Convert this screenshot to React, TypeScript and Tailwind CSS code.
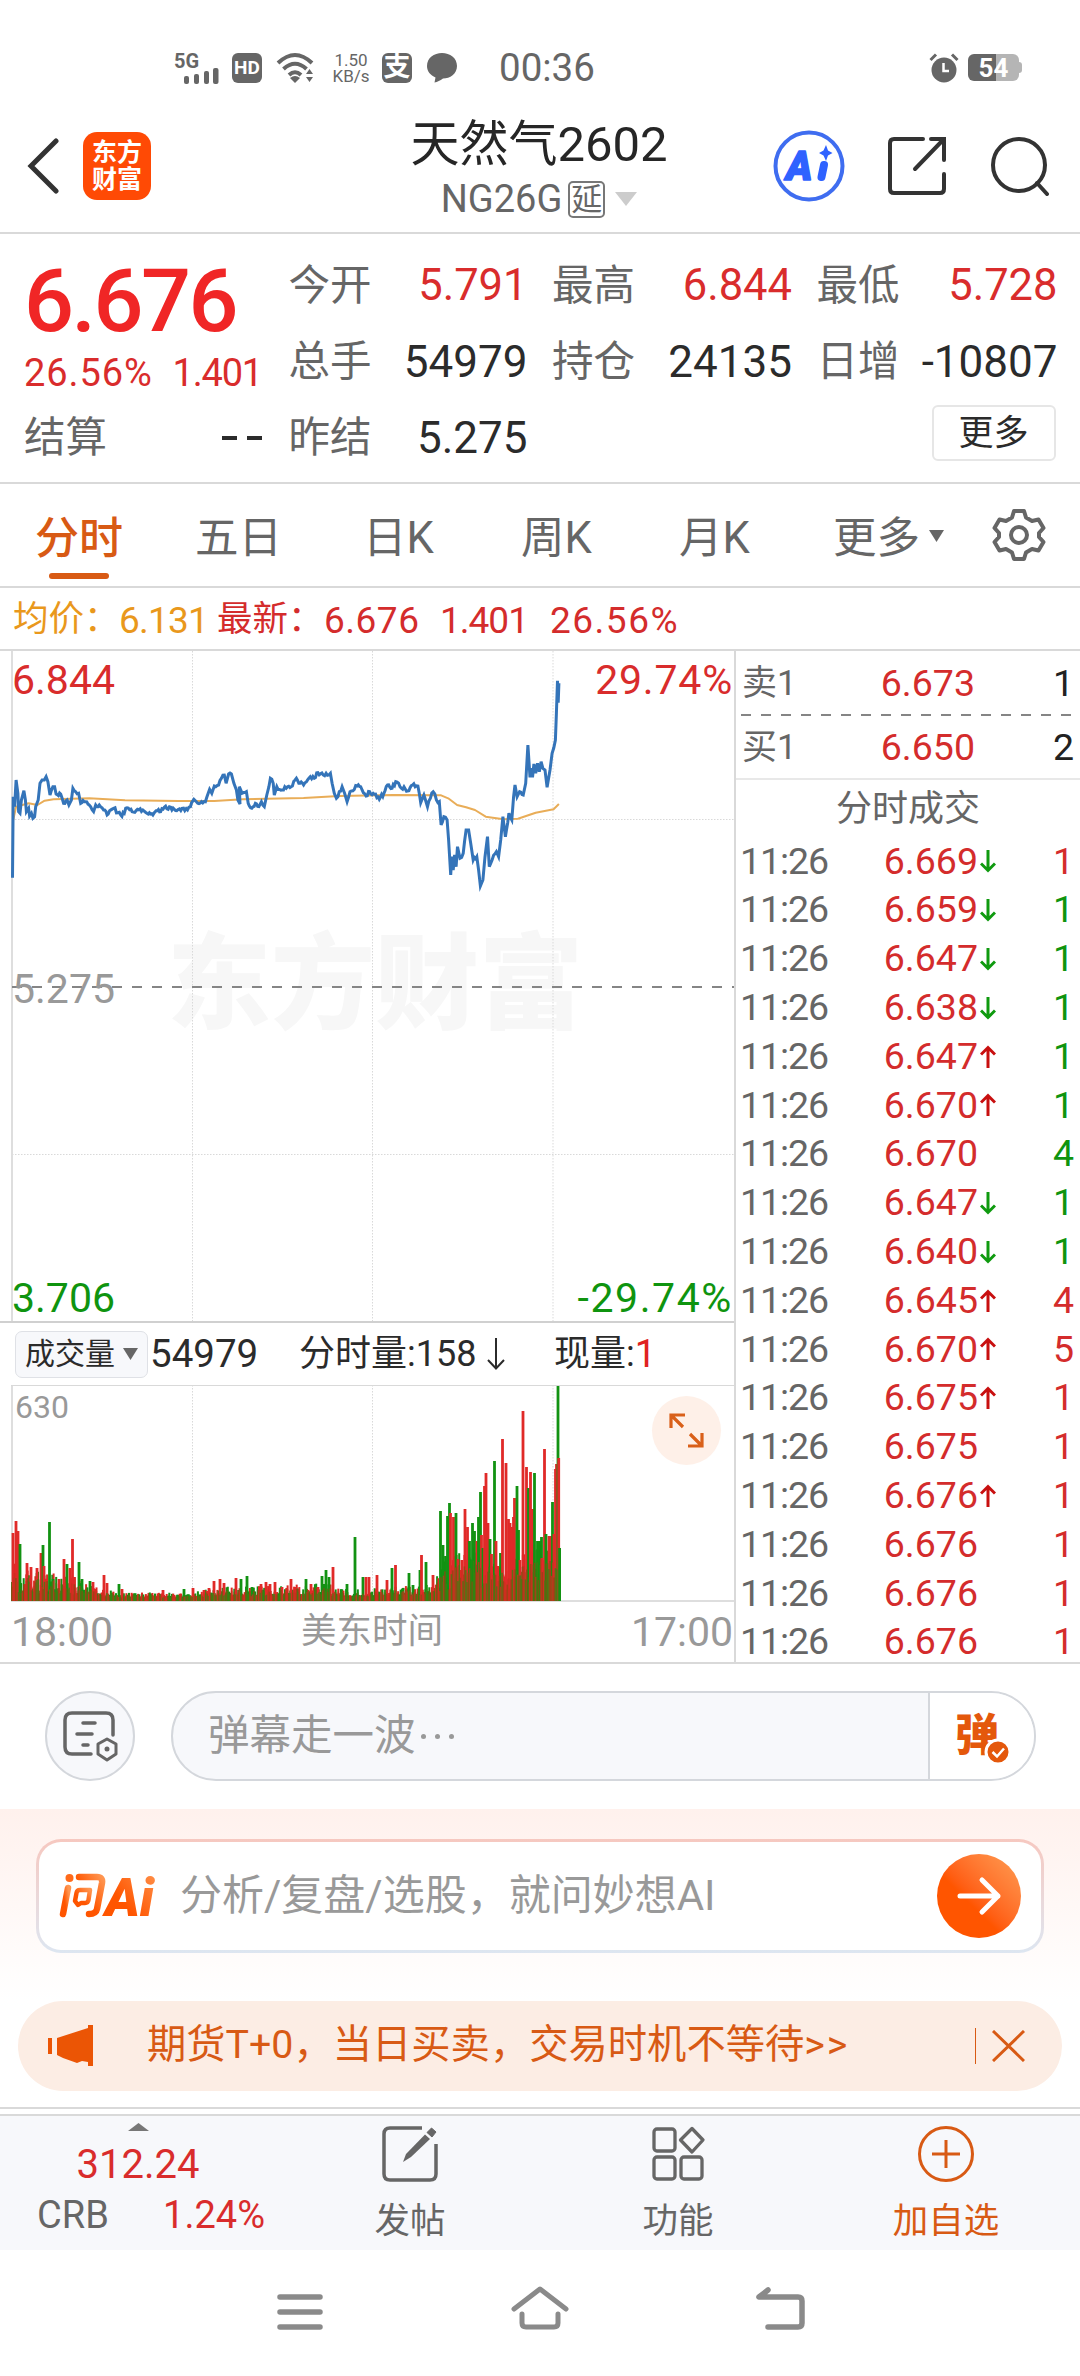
import type { ReactNode } from "react";

const RED = "#d42c2c";
const GREEN = "#0f940f";

type Dir = "up" | "down" | null;

const ticks: { price: string; dir: Dir; qty: number; buy: boolean }[] = [
  { price: "6.669", dir: "down", qty: 1, buy: true },
  { price: "6.659", dir: "down", qty: 1, buy: false },
  { price: "6.647", dir: "down", qty: 1, buy: false },
  { price: "6.638", dir: "down", qty: 1, buy: false },
  { price: "6.647", dir: "up", qty: 1, buy: false },
  { price: "6.670", dir: "up", qty: 1, buy: false },
  { price: "6.670", dir: null, qty: 4, buy: false },
  { price: "6.647", dir: "down", qty: 1, buy: false },
  { price: "6.640", dir: "down", qty: 1, buy: false },
  { price: "6.645", dir: "up", qty: 4, buy: true },
  { price: "6.670", dir: "up", qty: 5, buy: true },
  { price: "6.675", dir: "up", qty: 1, buy: true },
  { price: "6.675", dir: null, qty: 1, buy: true },
  { price: "6.676", dir: "up", qty: 1, buy: true },
  { price: "6.676", dir: null, qty: 1, buy: true },
  { price: "6.676", dir: null, qty: 1, buy: true },
  { price: "6.676", dir: null, qty: 1, buy: true },
];

// raw samples, scaled down by 2.8 horizontally and 3 vertically
const priceRaw = [
  35, 713, 37, 470, 41, 500, 45, 420, 50, 460, 52, 515, 56, 520, 60, 480, 67, 452, 71, 480, 74, 515, 80, 505, 83, 528,
  88, 520, 92, 535, 97, 530, 100, 500, 107, 480, 112, 430, 118, 420, 124, 420, 129, 410, 134, 425, 140, 465, 148, 440,
  153, 440, 157, 462, 170, 462, 178, 490, 188, 480, 193, 495, 200, 480, 204, 445, 212, 455, 220, 460, 226, 490, 236,
  485, 250, 495, 262, 515, 268, 495, 278, 495, 290, 510, 303, 522, 318, 505, 330, 518, 338, 525, 348, 520, 352, 505,
  370, 515, 385, 508, 400, 510, 415, 522, 428, 525, 437, 512, 450, 515, 460, 502, 478, 502, 495, 512, 510, 505, 525,
  510, 533, 500, 543, 478, 550, 485, 575, 485, 583, 460, 587, 448, 593, 460, 600, 438, 612, 435, 620, 415, 628, 405,
  633, 430, 640, 402, 648, 402, 655, 430, 662, 450, 666, 480, 672, 492, 670, 440, 678, 460, 690, 455, 695, 490, 705,
  505, 715, 490, 725, 500, 732, 485, 740, 500, 747, 465, 753, 440, 757, 415, 765, 430, 768, 465, 775, 440, 790, 450,
  805, 440, 815, 440, 830, 415, 840, 430, 850, 435, 865, 415, 880, 415, 890, 398, 905, 405, 925, 400, 930, 430, 936,
  460, 942, 475, 950, 455, 958, 440, 965, 460, 972, 485, 980, 455, 1000, 438, 1010, 440, 1025, 468, 1035, 455, 1045,
  460, 1062, 478, 1075, 460, 1085, 435, 1098, 445, 1108, 425, 1120, 440, 1135, 448, 1145, 452, 1155, 435, 1170, 438,
  1178, 488, 1187, 465, 1197, 500, 1205, 475, 1213, 455, 1222, 480, 1230, 485, 1235, 555, 1243, 530, 1252, 540, 1256,
  600, 1262, 705, 1265, 650, 1269, 690, 1273, 645, 1277, 680, 1281, 620, 1288, 655, 1297, 640, 1305, 570, 1312, 570,
  1318, 610, 1325, 660, 1335, 650, 1340, 690, 1345, 738, 1352, 720, 1358, 650, 1365, 590, 1370, 680, 1378, 660, 1390,
  635, 1396, 650, 1402, 600, 1408, 530, 1415, 590, 1425, 520, 1433, 540, 1438, 470, 1442, 435, 1448, 470, 1455, 455,
  1465, 465, 1472, 430, 1478, 315, 1484, 412, 1487, 385, 1491, 412, 1495, 372, 1500, 400, 1505, 370, 1510, 395, 1515,
  365, 1520, 385, 1526, 390, 1532, 442, 1540, 390, 1546, 340, 1555, 300, 1558, 220, 1561, 122, 1563, 188, 1565, 130,
];

const avgRaw = [
  37, 540, 45, 500, 80, 490, 105, 495, 125, 482, 150, 478, 250, 475, 350, 481, 500, 483, 600, 483, 680, 478, 850, 474,
  950, 468, 1100, 465, 1235, 466, 1255, 475, 1280, 495, 1305, 502, 1330, 510, 1360, 530, 1410, 538, 1450, 536, 1500,
  518, 1550, 508, 1565, 492,
];

// small deterministic noise, keeps the curves identical on every render
function noise(n: number) {
  const v = Math.sin(n * 127.1 + 3.7) * 43758.5453;
  return v - Math.floor(v);
}

function toPoints(raw: number[], jitter: number) {
  const out: string[] = [];
  for (let i = 0; i < raw.length; i += 2) {
    const x = raw[i] / 2.8;
    const y = raw[i + 1] / 3 - 11;
    out.push(`${x.toFixed(1)},${y.toFixed(1)}`);
    if (jitter && i + 3 < raw.length && raw[i + 2] - raw[i] > 7) {
      const nx = raw[i + 2] / 2.8;
      const ny = raw[i + 3] / 3 - 11;
      const steps = Math.round((nx - x) / 1.3);
      for (let s = 1; s < steps; s++) {
        const t = s / steps;
        const j = (noise(i * 9 + s) - 0.5) * jitter;
        out.push(`${(x + (nx - x) * t).toFixed(1)},${(y + (ny - y) * t + j).toFixed(1)}`);
      }
    }
  }
  return out.join(" ");
}

// x, height, 1 = red / 0 = green
const peaks = [
  [13, 68, 1], [16, 80, 1], [18, 70, 1], [20, 57, 0], [27, 38, 1], [31, 34, 1], [37, 33, 1], [41, 48, 1], [43, 56, 0],
  [44, 35, 1], [49.5, 79, 0], [53, 22, 0], [59, 22, 1], [64, 42, 1], [67, 37, 0], [70, 33, 1], [72.5, 62, 1],
  [74.5, 24, 1], [79, 39, 0], [82, 22, 0], [90, 20, 0], [93, 19, 1], [104, 26, 1], [107, 18, 1], [119, 17, 0],
  [122, 12, 1], [163, 11, 1], [184, 12, 0], [193, 13, 1], [204, 11, 1], [209, 13, 1], [214, 20, 1], [220, 22, 1],
  [224, 18, 1], [236, 23, 1], [241, 22, 0], [247, 25, 0], [252, 14, 0], [261, 17, 1], [266, 19, 1], [270, 17, 1],
  [275, 19, 1], [282, 14, 1], [291, 22, 1], [296, 14, 1], [306, 22, 0], [311, 17, 1], [318, 14, 1], [322, 25, 0],
  [326, 31, 0], [329, 24, 0], [333, 34, 1], [347, 17, 0], [355, 64, 0], [363, 24, 0], [366, 24, 1], [369, 24, 1],
  [377, 26, 1], [387, 21, 1], [392, 33, 0], [395.5, 36, 1], [403, 13, 0], [409, 28, 0], [413, 16, 0], [420, 31, 0],
  [421.5, 46, 1], [426, 39, 0], [433, 26, 1], [440.5, 90, 0], [443, 56, 0], [445.5, 45, 0], [447.5, 85, 0],
  [449.5, 98, 0], [450.5, 88, 1], [453.5, 84, 1], [456, 88, 0], [458, 42, 1], [462, 41, 1], [465, 92, 1],
  [467.5, 74, 1], [469.5, 60, 0], [472.5, 78, 0], [474.5, 70, 0], [477, 60, 1], [478.5, 84, 0], [480.5, 109, 0],
  [481.5, 66, 1], [483, 53, 0], [484.5, 115, 1], [486, 128, 1], [488, 78, 1], [490, 62, 0], [491.5, 47, 1],
  [494.5, 140, 0], [496, 60, 1], [498, 35, 1], [500.5, 48, 0], [502.5, 162, 1], [506, 138, 1], [508.5, 82, 1],
  [510, 78, 1], [512, 74, 1], [513.5, 84, 1], [514.5, 103, 1], [517, 115, 0], [518.5, 71, 0], [520, 41, 1],
  [523, 190, 1], [526.5, 134, 1], [528.5, 113, 0], [530.5, 129, 1], [532.5, 92, 1], [534.5, 128, 0], [537.5, 60, 0],
  [539.5, 60, 0], [541.5, 64, 0], [542, 43, 1], [544.5, 152, 1], [546, 67, 0], [549, 65, 1], [551, 65, 1],
  [552.5, 99, 0], [554, 67, 1], [555.5, 132, 1], [556.5, 137, 1], [558, 215, 0], [558.7, 143, 1], [559.6, 53, 0],
];

const envelope = [
  [12, 45], [22, 28], [70, 24], [90, 13], [120, 6], [190, 5], [215, 11], [330, 15], [350, 9], [435, 14], [440, 38],
  [480, 55], [500, 38], [520, 45], [560, 62],
];

function level(x: number) {
  for (let i = 1; i < envelope.length; i++) {
    const [x1, h1] = envelope[i];
    const [x0, h0] = envelope[i - 1];
    if (x <= x1) return h0 + ((h1 - h0) * (x - x0)) / (x1 - x0);
  }
  return 0;
}

const filler = Array.from({ length: 420 }, (_, i) => {
  const x = 12 + i * 1.3;
  return { x, h: 3 + level(x) * (0.25 + noise(i) * 0.75), red: noise(i + 900) > 0.5 };
});

function PriceChart() {
  return (
    <div className="relative h-[670px] w-[734px]">
      <span className="absolute left-[167px] top-[283px] text-[104px] font-black leading-none text-[#f7f7f7]">
        东方财富
      </span>
      <svg className="absolute left-0 top-0" width="734" height="671" fill="none">
        <g stroke="#d9d9d9" strokeDasharray="1.5 1.5">
          <path d="M192.5 0V670M372.5 0V670M553 0V670M12 168.5H734M12 503.5H734" />
        </g>
        <path d="M12 0V670" stroke="#dedede" strokeWidth="2" />
        <path d="M12 336H734" stroke="#858585" strokeWidth="2" strokeDasharray="10 10" />
        <polyline points={toPoints(avgRaw, 0)} stroke="#e9ad58" strokeWidth="2" strokeLinejoin="round" />
        <polyline points={toPoints(priceRaw, 4)} stroke="#3474b9" strokeWidth="3" />
      </svg>
      <span className="absolute left-[12px] top-[9px] text-[41px] leading-none text-[#d92c2c]">6.844</span>
      <span className="absolute right-[1px] top-[9px] text-[41px] leading-none tracking-[0.8px] text-[#d92c2c]">
        29.74%
      </span>
      <span className="absolute left-[12px] top-[318px] text-[41px] leading-none text-[#999]">5.275</span>
      <span className="absolute left-[12px] top-[627px] text-[41px] leading-none text-[#0f940f]">3.706</span>
      <span className="absolute right-[1px] top-[627px] text-[41px] leading-none tracking-[1.600px] text-[#0f940f]">
        -29.74%
      </span>
    </div>
  );
}

function VolumeChart() {
  return (
    <div className="relative h-[217px] w-[734px]">
      <svg className="absolute left-0 top-0" width="734" height="217" fill="none">
        <path d="M192.5 0V216M372.5 0V216M553 0V216" stroke="#d9d9d9" strokeDasharray="1.5 1.5" />
        <path d="M12 0V216M11 216H734" stroke="#dedede" strokeWidth="2" />
        <path d="M11 .5H734" stroke="#d9d9d9" />
        {filler.map((b) => (
          <rect key={b.x} x={b.x - 1} y={216 - b.h} width="2" height={b.h} fill={b.red ? "#dd2a22" : "#149014"} />
        ))}
        {peaks.map(([x, h, red], i) => (
          <rect key={i} x={x - 1.4} y={216 - h} width="2.8" height={h} fill={red ? "#e02a28" : "#129212"} />
        ))}
        {filler.map((b, i) => (
          <rect
            key={b.x}
            x={b.x - 0.8}
            y={216 - b.h * 0.75}
            width="1.6"
            height={b.h * 0.75}
            fill={i % 3 === 0 ? "#8b4a12" : b.red ? "#c9301e" : "#3c8010"}
            opacity="0.75"
          />
        ))}
      </svg>
      <span className="absolute left-[15px] top-[6px] text-[32px] leading-none text-[#999]">630</span>
      <button className="absolute left-[652px] top-[11px] flex size-[69px] items-center justify-center rounded-full bg-[#fef0e8]">
        <svg width="35" height="35" fill="none" stroke="#d9601a" strokeWidth="3.2">
          <path d="M2 15V2H16M3 3L14 14M33 20V33H19M32 32L21 21" />
        </svg>
      </button>
    </div>
  );
}

function TickArrow({ dir }: { dir: Dir }) {
  if (dir === "up")
    return (
      <svg width="16" height="24" fill="none" stroke="#c80f0f" strokeWidth="3">
        <path d="M8 23V3M1 9.500L8 2.500L15 9.500" />
      </svg>
    );
  if (dir === "down")
    return (
      <svg width="16" height="24" fill="none" stroke="#0f9a0f" strokeWidth="3">
        <path d="M8 1V21M1 14.500L8 21.500L15 14.500" />
      </svg>
    );
  return null;
}

function QuoteRow({ label, price, qty }: { label: string; price: string; qty: string }) {
  return (
    <div className="flex h-[62px] items-center pl-[6px] pr-[6px] pt-[1px] text-[37.500px] leading-none">
      <span className="w-[100px] whitespace-nowrap text-[35px] text-[#666]">{label}</span>
      <span className="w-[133px] text-right text-[#d42c2c]">{price}</span>
      <span className="flex-1 text-right text-[#222]">{qty}</span>
    </div>
  );
}

function OrderBook() {
  return (
    <div className="h-[1011px] w-[346px] border-l-2 border-[#d9d9d9]">
      <div className="h-[1px]" />
      <QuoteRow label="卖1" price="6.673" qty="1" />
      <svg className="block" width="344" height="2">
        <path d="M5 1H336" stroke="#858585" strokeWidth="2" strokeDasharray="10 10" />
      </svg>
      <QuoteRow label="买1" price="6.650" qty="2" />
      <div className="h-[2px] bg-[#e8e8e8]" />
      <div className="flex h-[57px] items-center justify-center pt-[1px] text-[36px] leading-none text-[#666]">
        分时成交
      </div>
      {ticks.map((t, i) => (
        <div key={i} className="flex h-[48.8px] items-center pl-[4px] pr-[6px] text-[37.500px] leading-none">
          <span className="w-[103px] tracking-[-1.100px] text-[#666]">11:26</span>
          <span className="w-[135px] text-right text-[#d42c2c]">{t.price}</span>
          <span className="w-[20px] pl-[2px]">
            <TickArrow dir={t.dir} />
          </span>
          <span className="flex-1 text-right" style={{ color: t.buy ? RED : GREEN }}>
            {t.qty}
          </span>
        </div>
      ))}
    </div>
  );
}

function StatusBar() {
  return (
    <div className="flex h-[100px] items-center pl-[174px] pr-[58px] pt-[35px] text-[#666]">
      <svg className="overflow-visible" width="46" height="32" fill="#666">
        <text x="0" y="16" fontSize="20" fontWeight="700">
          5G
        </text>
        <rect x="10" y="24" width="5" height="8" rx="2" />
        <rect x="20" y="22" width="5" height="10" rx="2" />
        <rect x="30" y="19" width="5" height="13" rx="2" />
        <rect x="39" y="16" width="5.500" height="16" rx="2" />
      </svg>
      <span className="ml-[12px] flex h-[30px] w-[30px] items-center justify-center rounded-[6px] bg-[#666] text-[19px] font-bold leading-none text-white">
        HD
      </span>
      <svg className="ml-[14px]" width="40" height="32" fill="none" stroke="#666" strokeWidth="4">
        <path d="M2 11Q19 -5 36 11" />
        <path d="M7.500 17Q19 6.500 30.500 17" />
        <path d="M13 23Q19 17.500 25 23" />
        <path d="M14 26Q19 22 24 26L19 31Z" fill="#666" stroke="none" />
        <path d="M30 22L33.500 17L37 22ZM30 25H37L33.500 30Z" fill="#666" stroke="none" />
      </svg>
      <div className="ml-[16px] w-[38px] text-center text-[17px] leading-[16px]">
        <div>1.50</div>
        <div>KB/s</div>
      </div>
      <span className="ml-[12px] flex size-[30px] items-center justify-center rounded-[6px] bg-[#666] text-[27px] font-bold leading-none text-white">
        支
      </span>
      <svg className="ml-[15px]" width="30" height="30" fill="#666">
        <path d="M15 0C23 0 30 5 30 13C30 21 23 25.500 16 25.500C13 27.500 10.500 29 7.500 29.500L8.500 24.500C3.500 22 0 18.500 0 13C0 5 7 0 15 0Z" />
      </svg>
      <span className="ml-[42px] pt-[2px] text-[38.500px] leading-none">00:36</span>
      <svg className="ml-auto" width="30" height="30" fill="none" stroke="#666" strokeWidth="3">
        <circle cx="15" cy="17" r="12.500" fill="#666" stroke="none" />
        <path d="M1.500 7L7 1.500M28.500 7L23 1.500" />
        <path d="M14.500 10V18H20" stroke="#fff" strokeWidth="2.500" />
      </svg>
      <div className="ml-[9px] flex h-[27px] items-center">
        <span className="flex h-[27px] w-[51px] items-center justify-center rounded-[6px] bg-linear-to-r from-[#666] from-54% to-[#b5b5b5] to-54% text-[26px] font-bold leading-none text-white">
          54
        </span>
        <span className="h-[11px] w-[3px] rounded-r bg-[#b5b5b5]" />
      </div>
    </div>
  );
}

function Header() {
  return (
    <div className="flex h-[134px] items-center border-b-2 border-[#d9d9d9] pl-[27px] pr-[31px]">
      <svg width="32" height="56" fill="none" stroke="#333" strokeWidth="5" strokeLinecap="round">
        <path d="M29 3L4 28L29 53" />
      </svg>
      <div className="ml-[24px] flex size-[68px] flex-col items-center justify-center rounded-[14px] bg-[#ff4a05] text-[25px] font-bold leading-[27px] text-white">
        <span>东方</span>
        <span>财富</span>
      </div>
      <div className="flex flex-1 flex-col items-center pl-[154px] pt-[6px]">
        <div className="whitespace-nowrap text-[49px] leading-none text-[#262626]">天然气2602</div>
        <div className="mt-[11px] flex items-center text-[#666]">
          <span className="text-[38px] leading-none">NG26G</span>
          <span className="ml-[6px] flex size-[37px] items-center justify-center rounded-[5px] border-2 border-[#777] text-[31px] leading-none">
            延
          </span>
          <svg className="ml-[10px]" width="22" height="14" fill="#ccc">
            <path d="M0 0H22L11 14Z" />
          </svg>
        </div>
      </div>
      <svg width="72" height="72" fill="none">
        <circle cx="36" cy="36" r="33.500" stroke="#3f6df0" strokeWidth="4" />
        <text
          x="13"
          y="50"
          fontSize="40"
          fontWeight="900"
          fontStyle="italic"
          fill="#2f62ff"
          stroke="#2f62ff"
          strokeWidth="1.500"
          strokeLinejoin="round"
        >
          A
        </text>
        <path d="M51 35L48.500 47" stroke="#2f62ff" strokeWidth="8" strokeLinecap="round" />
        <path d="M53 15L55 20.500L59.500 23L55 25.500L53 31L50.500 25.500L46 23L50.500 20.500Z" fill="#2f62ff" />
      </svg>
      <svg className="ml-[43px]" width="58" height="60" fill="none" stroke="#333" strokeWidth="4" strokeLinecap="round">
        <path d="M35 3H6Q2 3 2 7V53Q2 57 6 57H52Q56 57 56 53V38" />
        <path d="M43 3H56V24M55 4L27 33" />
      </svg>
      <svg className="ml-[45px]" width="58" height="60" fill="none" stroke="#333" strokeWidth="4" strokeLinecap="round">
        <circle cx="28" cy="29" r="26" />
        <path d="M46 47L56 58" />
      </svg>
    </div>
  );
}

function Stat({ label, value, red }: { label: string; value: string; red?: boolean }) {
  return (
    <div className="flex items-center justify-between whitespace-nowrap leading-none">
      <span className="text-[41.500px] text-[#666]">{label}</span>
      <span
        className={
          red ? "-mr-[2px] text-[43.500px] text-[#d92c2c]" : "-mr-[2px] text-[44px] text-[#2b2b2b]"
        }
      >
        {value}
      </span>
    </div>
  );
}

function Stats() {
  return (
    <div className="grid h-[250px] grid-cols-[238px_237px_238px_239px] grid-rows-[76px_76px_76px] gap-x-[26.500px] border-b-2 border-[#d9d9d9] pl-[24px] pt-[14px]">
      <div className="row-span-2 flex flex-col">
        <span className="mt-[9px] text-[88px] font-medium leading-none tracking-[-2.500px] text-[#f02626]">6.676</span>
        <div className="mt-[9px] flex items-center justify-between text-[38px] leading-none text-[#d92c2c]">
          <span className="tracking-[0.900px]">26.56%</span>
          <span className="tracking-[-1.200px]">1.401</span>
        </div>
      </div>
      <Stat label="今开" value="5.791" red />
      <Stat label="最高" value="6.844" red />
      <Stat label="最低" value="5.728" red />
      <Stat label="总手" value="54979" />
      <Stat label="持仓" value="24135" />
      <Stat label="日增" value="-10807" />
      <div className="flex items-center justify-between text-[41.500px] leading-none text-[#666]">
        <span>结算</span>
        <span className="flex gap-[10px]">
          <i className="h-[3.500px] w-[15px] bg-[#2b2b2b]" />
          <i className="h-[3.500px] w-[15px] bg-[#2b2b2b]" />
        </span>
      </div>
      <Stat label="昨结" value="5.275" />
      <div />
      <div className="flex justify-end pt-[5px]">
        <button className="flex h-[56px] w-[124px] items-center justify-center rounded-[6px] border-2 border-[#e6e6e6] text-[35px] leading-none text-[#2b2b2b]">
          更多
        </button>
      </div>
    </div>
  );
}

function Tabs() {
  return (
    <div className="flex h-[104px] items-start border-b-2 border-[#d9d9d9] pl-[35px] text-[43.500px] leading-none text-[#666]">
      <div className="flex w-[160px] flex-col pt-[33px] text-[#d85a14]">
        <span className="text-[44px] font-medium">分时</span>
        <span className="ml-[14px] mt-[12px] h-[6px] w-[60px] rounded-full bg-[#d85a14]" />
      </div>
      <span className="w-[168px] pt-[33px]">五日</span>
      <span className="w-[158px] pt-[33px]">日K</span>
      <span className="w-[158px] pt-[33px]">周K</span>
      <span className="w-[154px] pt-[33px]">月K</span>
      <span className="w-[96px] pt-[33px]">更多</span>
      <svg className="mt-[46px]" width="15" height="12" fill="#666">
        <path d="M0 0H15L7.500 12Z" />
      </svg>
      <svg className="ml-[48px] mt-[24px]" width="54" height="54" viewBox="0 0 54 54" fill="none" stroke="#666" strokeWidth="4">
        <path
          strokeLinejoin="round"
          d="M22 3H32L34 9.500L40 13L46.500 11.500L51.500 20L47 25V29L51.500 34L46.500 42.500L40 41L34 44.500L32 51H22L20 44.500L14 41L7.500 42.500L2.500 34L7 29V25L2.500 20L7.500 11.500L14 13L20 9.500Z"
        />
        <circle cx="27" cy="27" r="8" />
      </svg>
    </div>
  );
}

function AverageLine() {
  return (
    <div className="flex h-[63px] items-center whitespace-pre border-b-2 border-[#d9d9d9] pl-[13px] pt-[3px] text-[37px] leading-none text-[#d42c2c]">
      <span className="w-[106px] text-[35.500px] text-[#e9981c]">均价：</span>
      <span className="w-[98px] tracking-[-0.800px] text-[#e9981c]">6.131</span>
      <span className="w-[107px] text-[35.500px]">最新：</span>
      <span className="w-[116px] tracking-[0.500px]">6.676</span>
      <span className="w-[110px] tracking-[-1px]">1.401</span>
      <span className="tracking-[1.500px]">26.56%</span>
    </div>
  );
}

function VolumeInfo() {
  return (
    <div className="flex h-[64px] items-center border-t-2 border-[#d0d0d0] pl-[15px] text-[36px] leading-none text-[#2b2b2b]">
      <div className="flex h-[47px] w-[133px] items-center gap-[8px] rounded-[7px] border border-[#dfe1e6] bg-[#f7f8fb] pl-[9px]">
        <span className="text-[30px]">成交量</span>
        <svg width="15" height="12" fill="#666">
          <path d="M0 0H15L7.500 12Z" />
        </svg>
      </div>
      <span className="ml-[2px] w-[149px] text-[38.500px]">54979</span>
      <span className="w-[182px]">分时量:158</span>
      <svg className="ml-[3px]" width="26" height="34" fill="none" stroke="#2b2b2b" strokeWidth="2">
        <path d="M12 1V31M4 23L12 31.500L20 23" />
      </svg>
      <span className="ml-[44px]">现量:</span>
      <span className="text-[38px] text-[#e02222]">1</span>
    </div>
  );
}

function DanmuBar() {
  return (
    <div className="flex h-[145px] items-center pb-[1px] pl-[45px]">
      <button className="flex size-[90px] items-center justify-center rounded-full border-2 border-[#d4d7dc] bg-[#f7f8fb]">
        <svg width="56" height="52" fill="none" stroke="#666" strokeWidth="3.500" strokeLinecap="round">
          <path d="M29 44H10Q3 44 3 37V10Q3 3 10 3H44Q51 3 51 10V25" />
          <path d="M21 13H33M15 24H30M21 35H26" />
          <path d="M45 29L54 34V44L45 50L36 44V34Z" strokeLinejoin="round" strokeWidth="3" />
          <circle cx="45" cy="39" r="2.500" fill="#666" stroke="none" />
        </svg>
      </button>
      <div className="ml-[36px] flex h-[90px] w-[865px] overflow-hidden rounded-full border-2 border-[#d4d7dc] bg-[#f7f8fb]">
        <div className="flex flex-1 items-center pl-[35px] text-[41.500px] leading-none text-[#999]">
          弹幕走一波
          <span className="flex gap-[9px] pl-[5px]">
            <i className="size-[5px] rounded-full bg-[#999]" />
            <i className="size-[5px] rounded-full bg-[#999]" />
            <i className="size-[5px] rounded-full bg-[#999]" />
          </span>
        </div>
        <div className="relative w-[106px] border-l-2 border-[#d4d7dc] bg-white">
          <span className="absolute left-[25px] top-[21px] text-[44px] font-black leading-none text-[#e4580c]">弹</span>
          <svg className="absolute left-[54px] top-[45px]" width="28" height="28" fill="none">
            <circle cx="14" cy="14" r="12" fill="#e4580c" stroke="#fff" strokeWidth="3" />
            <path d="M8.500 14L13 18.500L20 10.500" stroke="#fff" strokeWidth="2.500" />
          </svg>
        </div>
      </div>
    </div>
  );
}

function AskAi() {
  return (
    <div className="h-[192px] bg-linear-to-b from-[#fff1ed] to-white px-[36px] pt-[30px]">
      <div className="rounded-[25px] bg-linear-to-b from-[#f6c8c0] to-[#dde6f1] px-[3px] py-[3px]">
        <div className="flex h-[108px] items-center rounded-[22px] bg-white pl-[20px] pr-[20px]">
          <svg className="overflow-visible" width="102" height="50" viewBox="0 0 102 50">
            <defs>
              <linearGradient id="ask" x1="0" y1="1" x2="1" y2="0">
                <stop offset="0.400" stopColor="#ff5500" />
                <stop offset="1" stopColor="#ff9550" />
              </linearGradient>
            </defs>
            <g fill="none" stroke="url(#ask)" strokeWidth="6.500" strokeLinecap="round" strokeLinejoin="round">
              <path d="M9 17L4 43" />
              <path d="M20 6H38Q44 6 43 12L38 38Q37 43 30 43" />
              <path d="M31 19H21Q18 19 17.500 22L16 30L19 34L22 32H26Q29 32 29.500 29Z" strokeWidth="4.500" />
            </g>
            <circle cx="10.500" cy="7" r="4" fill="#ff6a1a" />
            <text x="46" y="45" fontSize="53" fontWeight="900" fontStyle="italic" fill="url(#ask)" textLength="49">
              Ai
            </text>
          </svg>
          <span className="ml-[19px] whitespace-nowrap text-[42px] leading-none text-[#999]">
            分析/复盘/选股，就问妙想AI
          </span>
          <button className="ml-auto flex size-[84px] items-center justify-center rounded-full bg-linear-to-tr from-[#ff5500] from-40% to-[#ff9d52]">
            <svg width="46" height="40" fill="none" stroke="#fff" strokeWidth="5" strokeLinecap="round" strokeLinejoin="round">
              <path d="M4 20H42M26 4L42 20L26 36" />
            </svg>
          </button>
        </div>
      </div>
    </div>
  );
}

function PromoBanner() {
  return (
    <div className="mx-[18px] flex h-[90px] items-center rounded-full bg-[#fcede4] pl-[30px] text-[#d85a14]">
      <svg width="46" height="42" fill="#eb5505">
        <path d="M0 13H4V29H0ZM9 13L40 3V0H45V41H40V37L34 36L29 38L15 33L9 30Z" />
      </svg>
      <span className="ml-[53px] whitespace-nowrap text-[39.300px] leading-none">
        期货T+0，当日买卖，交易时机不等待<span className="tracking-[2px]">&gt;&gt;</span>
      </span>
      <span className="ml-auto h-[36px] w-[1.500px] bg-[#d85a14]" />
      <svg className="ml-[16px] mr-[37px]" width="33" height="32" fill="none" stroke="#d85a14" strokeWidth="3">
        <path d="M1 1L32 31M32 1L1 31" />
      </svg>
    </div>
  );
}

function Action({ label, className, children }: { label: string; className: string; children: ReactNode }) {
  return (
    <div className={className}>
      {children}
      <span className="mt-[21px] text-[35.500px] leading-none">{label}</span>
    </div>
  );
}

function BottomBar() {
  return (
    <div className="mt-[16px] border-t-2 border-[#d9d9d9] pt-[5px]">
      <div className="flex h-[136px] border-t-2 border-[#d9d9d9] bg-[#f7f8fb]">
        <div className="flex w-[276px] flex-col items-center leading-none text-[#d92c2c]">
          <svg className="mt-[7px]" width="21" height="8" fill="#777">
            <path d="M10.500 0L21 8H0Z" />
          </svg>
          <span className="mt-[14px] text-[40px]">312.24</span>
          <div className="ml-[26px] flex w-[228px] justify-between pt-[11px] text-[38px]">
            <span className="text-[38px] text-[#666]">CRB</span>
            <span>1.24%</span>
          </div>
        </div>
        <Action label="发帖" className="flex w-[268px] flex-col items-center pt-[9px] text-[#666]">
          <svg width="58" height="58" fill="none" stroke="#666" strokeWidth="3.500">
            <path d="M41 3H9Q3 3 3 9V49Q3 55 9 55H49Q55 55 55 49V19" />
            <path d="M22 37L25 29L44 9.500L49 14L30 32Z" fill="#666" stroke="none" />
            <path d="M46 7.500L50.500 3L55 7L51 12Z" fill="#666" stroke="#666" strokeWidth="1" />
          </svg>
        </Action>
        <Action label="功能" className="flex w-[268px] flex-col items-center pt-[9px] text-[#666]">
          <svg width="56" height="58" fill="none" stroke="#666" strokeWidth="3.300">
            <rect x="4" y="4" width="21" height="22" rx="3" />
            <rect x="4" y="32" width="21" height="22" rx="3" />
            <rect x="31" y="32" width="21" height="22" rx="3" />
            <path d="M42 3.500L53 15L42 27L30.500 15Z" strokeLinejoin="round" />
          </svg>
        </Action>
        <Action label="加自选" className="flex w-[268px] flex-col items-center pt-[9px] text-[#d85a14]">
          <svg width="58" height="58" fill="none" stroke="#d85a14" strokeWidth="3">
            <circle cx="29" cy="29" r="26.500" />
            <path d="M29 15V43M15 29H43" />
          </svg>
        </Action>
      </div>
    </div>
  );
}

function NavKeys() {
  return (
    <div className="flex h-[126px] items-start pl-[277px] pt-[35px]">
      <svg width="46" height="48" fill="none" stroke="#8a8a8a" strokeWidth="5.500" strokeLinecap="round">
        <path d="M3 12H43M3 27H43M3 42H43" />
      </svg>
      <svg className="ml-[188px]" width="58" height="48" fill="none" stroke="#8a8a8a" strokeWidth="5" strokeLinecap="round" strokeLinejoin="round">
        <path d="M3 24L29 4L55 24" />
        <path d="M11 29V38Q11 42 15 42H43Q47 42 47 38V29" />
      </svg>
      <svg className="ml-[187px]" width="50" height="48" fill="none" stroke="#8a8a8a" strokeWidth="5.500" strokeLinecap="round" strokeLinejoin="round">
        <path d="M12 5L3 12H42Q46 12 46 16V38Q46 42 42 42H12" />
      </svg>
    </div>
  );
}

export default function App() {
  return (
    <div className="h-[2376px] w-[1080px] overflow-hidden bg-white font-[Roboto,'Noto_Sans_CJK_SC',sans-serif]">
      <StatusBar />
      <Header />
      <Stats />
      <Tabs />
      <AverageLine />
      <div className="flex border-b-2 border-[#d9d9d9]">
        <div className="w-[734px]">
          <PriceChart />
          <VolumeInfo />
          <VolumeChart />
          <div className="flex h-[60px] items-center justify-between pl-[11px] pr-[1px] text-[41px] leading-none text-[#999]">
            <span>18:00</span>
            <span className="text-[35.500px]">美东时间</span>
            <span>17:00</span>
          </div>
        </div>
        <OrderBook />
      </div>
      <DanmuBar />
      <AskAi />
      <PromoBanner />
      <BottomBar />
      <NavKeys />
    </div>
  );
}
